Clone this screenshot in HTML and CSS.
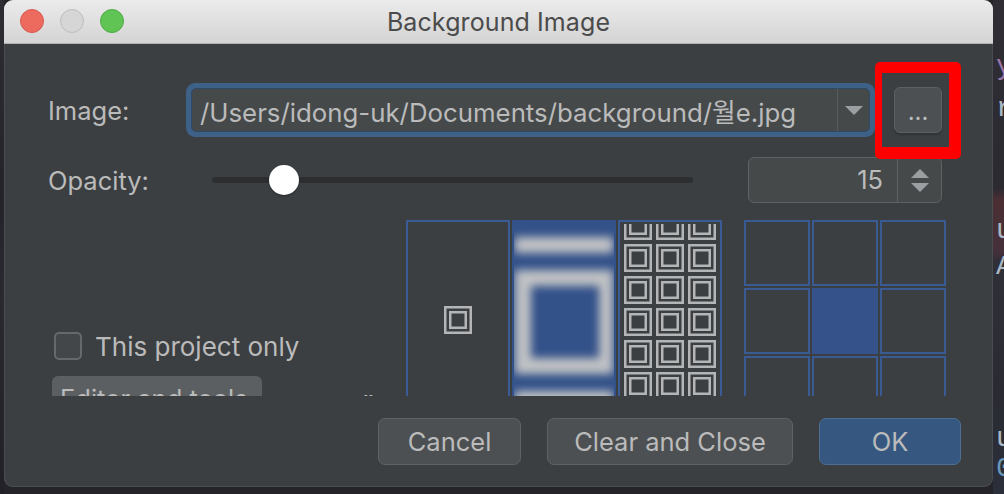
FILE: index.html
```html
<!DOCTYPE html>
<html lang="en">
<head>
<meta charset="utf-8">
<title>Background Image</title>
<link rel="stylesheet" href="styles.css">
</head>
<body>
<div class="desktop">
  <div class="edge-left"></div>
  <div class="window">
    <div class="titlebar">
      <div class="lights">
        <span class="light red"></span>
        <span class="light gray"></span>
        <span class="light green"></span>
      </div>
      <div class="title">Background Image</div>
    </div>
    <div class="pane">
      <div class="row row-image">
        <div class="label label-image">Image:</div>
        <div class="combo-ring">
          <div class="combo">
            <span class="combo-text">/Users/idong-uk/Documents/background/월e.jpg</span>
            <span class="combo-arrow"><span class="tri-down"></span></span>
          </div>
        </div>
        <div class="browse-wrap">
          <button class="browse">...</button>
          <div class="red-frame"></div>
        </div>
      </div>
      <div class="row row-opacity">
        <div class="label label-opacity">Opacity:</div>
        <div class="slider">
          <div class="track"></div>
          <div class="thumb" style="left:15%"></div>
        </div>
        <div class="spinner">
          <div class="spin-value">15</div>
          <div class="spin-arrows"><span class="tri-up"></span><span class="tri-down small"></span></div>
        </div>
      </div>
      <div class="viewport">
        <div class="left-col">
          <div class="check-row">
            <span class="checkbox"></span>
            <span class="check-label">This project only</span>
          </div>
          <div class="tab-row">
            <div class="tab-btn">Editor and tools</div>
            <div class="chevrons">»</div>
          </div>
        </div>
        <div class="previews">
          <div class="panel panel-plain">
            <svg class="sq-icon" width="28" height="28" viewBox="0 0 28 28"><rect x="1.25" y="1.25" width="25.5" height="25.5" fill="none" stroke="#b3b5b7" stroke-width="2.5"/><rect x="6.25" y="6.25" width="15.5" height="15.5" fill="none" stroke="#b3b5b7" stroke-width="2.5"/></svg>
          </div>
          <div class="panel panel-scaled">
            <div class="blur-bar"></div>
            <div class="blur-square"></div>
            <div class="blur-bar bottom"></div>
          </div>
          <div class="panel panel-tiled">
            <svg class="tiles" width="96" height="196">
              <defs>
                <pattern id="tile" x="2" y="-12" width="32" height="32" patternUnits="userSpaceOnUse">
                  <rect x="1.25" y="1.25" width="25.5" height="25.5" fill="none" stroke="#b3b5b7" stroke-width="2.5"/>
                  <rect x="6.25" y="6.25" width="15.5" height="15.5" fill="none" stroke="#b3b5b7" stroke-width="2.5"/>
                </pattern>
              </defs>
              <rect width="96" height="196" fill="url(#tile)"/>
            </svg>
          </div>
          <div class="anchor-grid">
            <span class="cell"></span><span class="cell"></span><span class="cell"></span>
            <span class="cell"></span><span class="cell on"></span><span class="cell"></span>
            <span class="cell"></span><span class="cell"></span><span class="cell"></span>
          </div>
        </div>
      </div>
      <div class="buttons">
        <button class="btn btn-cancel">Cancel</button>
        <button class="btn btn-clear">Clear and Close</button>
        <button class="btn btn-ok">OK</button>
      </div>
    </div>
  </div>
  <div class="edge-right">
    <div class="code purple l1">y</div>
    <div class="code l2">r</div>
    <div class="code l3">u</div>
    <div class="code l4">A</div>
    <div class="code l5">u</div>
    <div class="code blue l6">0</div>
  </div>
</div>
</body>
</html>
```

FILE: styles.css
```css
* { box-sizing: border-box; }
html, body { margin: 0; padding: 0; }
body {
  width: 1004px;
  height: 494px;
  overflow: hidden;
  background: #252429;
  font-family: Inter, "Noto Sans CJK KR", sans-serif;
}
.desktop {
  display: flex;
  width: 1004px;
  height: 494px;
}
.edge-left {
  width: 4px;
  flex: none;
  background: linear-gradient(#2e2d33, #24232a 40%, #2b2830 60%, #222127);
}
.window {
  width: 989px;
  height: 487px;
  flex: none;
  background: #3c3f41;
  border-radius: 9px;
  overflow: hidden;
  display: flex;
  flex-direction: column;
  box-shadow: 0 0 0 1px #4a4d50 inset;
}
.titlebar {
  height: 44px;
  flex: none;
  background: linear-gradient(#ebebeb, #d4d4d4);
  border-bottom: 1px solid #b2b2b2;
  display: flex;
  align-items: center;
  position: relative;
}
.lights {
  display: flex;
  gap: 16px;
  padding-left: 16px;
  padding-bottom: 1px;
}
.light {
  width: 24px;
  height: 24px;
  border-radius: 50%;
  display: block;
}
.red { background: #ed6a5e; border: 1px solid #d65a4f; }
.gray { background: #d6d6d6; border: 1px solid #bdbdbd; }
.green { background: #5fc454; border: 1px solid #4ea944; }
.title {
  position: absolute;
  left: 0;
  right: 0;
  text-align: center;
  font-size: 25px;
  color: #4b4b4b;
  letter-spacing: 0.1px;
}
.pane {
  flex: 1;
  padding: 39px 0 0 40px;
  color: #bbbbbb;
}
.row {
  display: flex;
  align-items: center;
}
.label {
  font-size: 25.5px;
  color: #bbbbbb;
  padding-left: 4px;
  flex: none;
}
.row-image { height: 54px; }
.label-image { width: 142px; }
.combo-ring {
  width: 689px;
  height: 54px;
  padding: 5px;
  border-radius: 9px;
  background: #3e6188;
  flex: none;
}
.combo {
  height: 100%;
  border-radius: 5px;
  background: #45494a;
  border: 1px solid #2f4a69;
  display: flex;
  align-items: center;
}
.combo-text {
  flex: 1;
  padding-left: 8px;
  font-size: 25.8px;
  color: #bbbbbb;
  white-space: nowrap;
  overflow: hidden;
}
.combo-arrow {
  width: 32px;
  height: 100%;
  border-left: 1px solid #595c5e;
  display: flex;
  align-items: center;
  justify-content: center;
}
.tri-down {
  width: 0;
  height: 0;
  border-left: 9px solid transparent;
  border-right: 9px solid transparent;
  border-top: 9px solid #9c9fa2;
  display: block;
}
.tri-up {
  width: 0;
  height: 0;
  border-left: 9px solid transparent;
  border-right: 9px solid transparent;
  border-bottom: 9px solid #9c9fa2;
  display: block;
}
.browse-wrap {
  position: relative;
  margin-left: 19px;
  flex: none;
}
.browse {
  width: 48px;
  height: 46px;
  display: block;
  border-radius: 6px;
  background: #4c5052;
  border: 1px solid #5e6163;
  color: #bbbbbb;
  font-family: Inter, sans-serif;
  font-size: 24px;
  line-height: 30px;
  padding: 4px 0 0;
  box-shadow: 0 2px 2px rgba(0,0,0,0.2);
}
.red-frame {
  position: absolute;
  left: -19px;
  top: -25px;
  right: -19px;
  bottom: -26px;
  border-style: solid;
  border-color: #ff0000;
  border-width: 11px 12px 12px 7px;
  border-radius: 5px;
}
.row-opacity {
  height: 46px;
  margin-top: 20px;
}
.label-opacity { width: 168px; }
.slider {
  position: relative;
  width: 481px;
  height: 30px;
  display: flex;
  align-items: center;
  flex: none;
}
.track {
  width: 100%;
  height: 6px;
  border-radius: 3px;
  background: #2c2e30;
}
.thumb {
  position: absolute;
  top: 0;
  width: 30px;
  height: 30px;
  margin-left: -15px;
  border-radius: 50%;
  background: #ffffff;
  box-shadow: 0 1px 2px rgba(0,0,0,0.4);
}
.spinner {
  margin-left: 55px;
  width: 194px;
  height: 46px;
  display: flex;
  border: 1px solid #5f6264;
  border-radius: 6px;
  background: #45494a;
  flex: none;
}
.spin-value {
  flex: 1;
  text-align: right;
  font-size: 25.5px;
  line-height: 44px;
  padding-right: 14px;
  color: #bbbbbb;
}
.spin-arrows {
  width: 44px;
  border-left: 1px solid #5f6264;
  display: flex;
  flex-direction: column;
  align-items: center;
  justify-content: center;
  gap: 5px;
}
.viewport {
  margin-top: 17px;
  height: 176px;
  overflow: hidden;
  display: flex;
}
.left-col {
  width: 362px;
  flex: none;
  padding-top: 112px;
}
.check-row {
  display: flex;
  align-items: center;
  height: 28px;
  padding-left: 10px;
}
.checkbox {
  width: 28px;
  height: 28px;
  border: 2px solid #66696b;
  border-radius: 5px;
  background: #43474a;
  display: block;
  flex: none;
}
.check-label {
  margin-left: 13px;
  font-size: 26px;
  color: #bbbbbb;
  white-space: nowrap;
}
.tab-row {
  display: flex;
  align-items: flex-start;
  margin-top: 16px;
  padding-left: 8px;
}
.tab-btn {
  width: 210px;
  height: 46px;
  border-radius: 6px;
  background: #5b5f61;
  font-size: 25.5px;
  line-height: 46px;
  padding-left: 8px;
  color: #bbbbbb;
  white-space: nowrap;
  flex: none;
}
.chevrons {
  margin-left: 101px;
  font-size: 26px;
  line-height: 1;
  margin-top: 11px;
  color: #bbbbbb;
}
.previews {
  display: flex;
  align-items: flex-start;
  gap: 2px;
}
.panel {
  width: 104px;
  height: 200px;
  border: 2px solid #3a5b95;
  flex: none;
}
.panel-plain {
  display: flex;
  align-items: center;
  justify-content: center;
}
.sq-icon { display: block; }
.panel-scaled {
  background: #34528a;
  border-color: #34528a;
  display: flex;
  flex-direction: column;
  align-items: stretch;
  padding: 0 1px;
  overflow: hidden;
}
.blur-bar {
  height: 16px;
  margin-top: 15px;
  background: #c0c2c4;
  filter: blur(4px);
  flex: none;
}
.blur-square {
  height: 104px;
  margin-top: 17px;
  border: 16px solid #c0c2c4;
  border-right-width: 14px;
  filter: blur(4px);
  flex: none;
}
.blur-bar.bottom { margin-top: 17px; }
.panel-tiled {
  padding: 2px;
  overflow: hidden;
}
.tiles { display: block; }
.anchor-grid {
  margin-left: 20px;
  display: grid;
  grid-template-columns: repeat(3, 66px);
  grid-auto-rows: 66px;
  gap: 2px;
}
.cell {
  border: 2px solid #3a5a93;
  display: block;
}
.cell.on {
  background: #35538a;
  border-color: #35538a;
}
.buttons {
  margin-top: 22px;
  display: flex;
  justify-content: flex-end;
  gap: 26px;
  padding-right: 32px;
}
.btn {
  height: 47px;
  border-radius: 7px;
  background: #4c5052;
  border: 1px solid #5f6264;
  color: #bbbbbb;
  font-family: Inter, sans-serif;
  font-size: 25.5px;
  padding: 0;
}
.btn-cancel { width: 143px; }
.btn-clear { width: 246px; }
.btn-ok {
  width: 142px;
  background: #365880;
  border-color: #4b6f93;
}
.edge-right {
  width: 11px;
  flex: none;
  background: linear-gradient(#302d35, #2b2a31 38%, #4a2e33 40.5%, #45303a 51%, #2f2f38 53%, #2a2b32 80%, #2b2f3a);
  overflow: hidden;
  font-family: "Liberation Mono", monospace;
  font-size: 28px;
  line-height: 26px;
  color: #a9b7c6;
  padding-left: 3px;
}
.code { white-space: nowrap; }
.purple { color: #9876aa; }
.blue { color: #6897bb; }
.l1 { margin-top: 54px; }
.l2 { margin-top: 16px; }
.l3 { margin-top: 96px; }
.l4 { margin-top: 10px; }
.l5 { margin-top: 146px; }
.l6 { margin-top: 4px; }
```
